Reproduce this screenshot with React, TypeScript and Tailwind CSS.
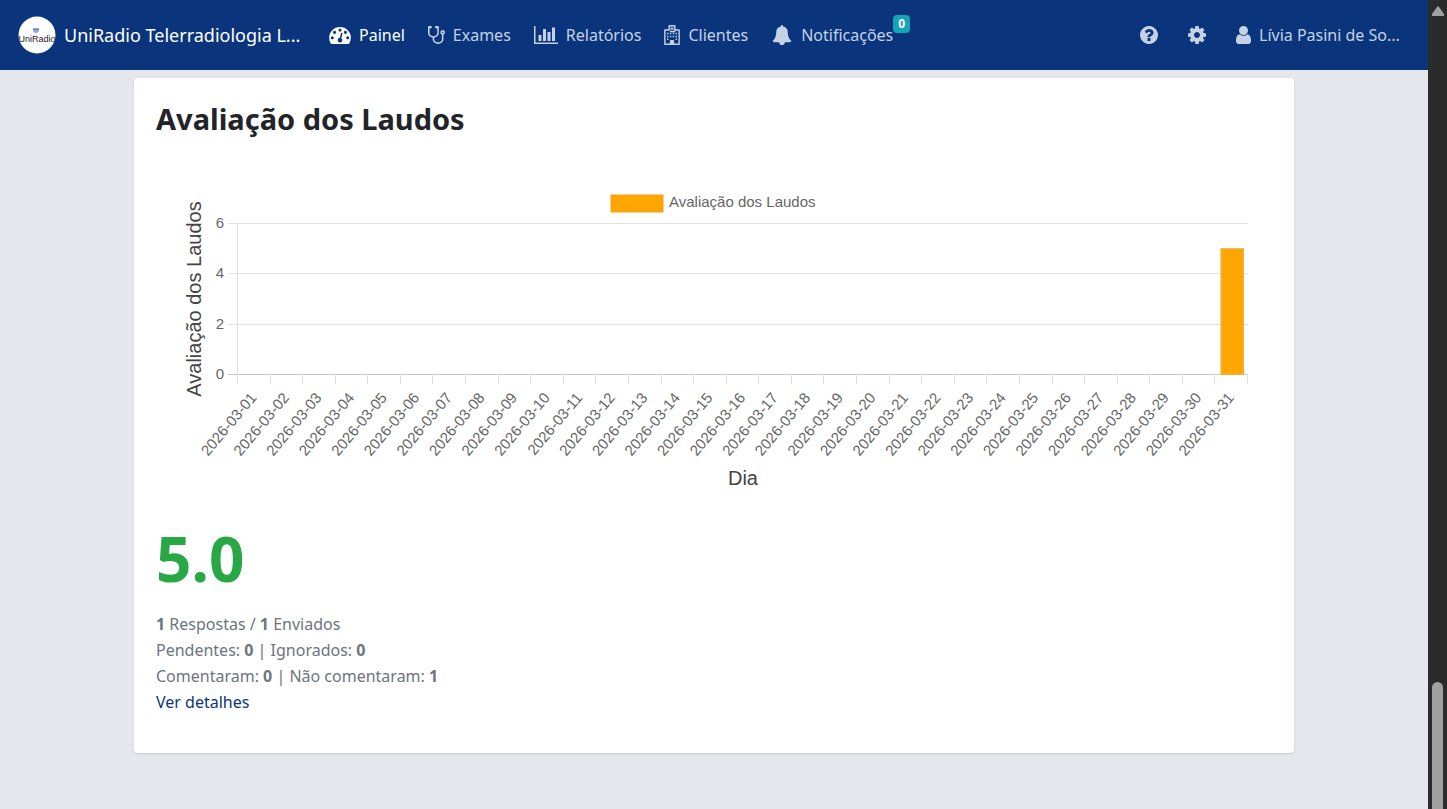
import type { ReactNode } from "react";

const icons = {
  dashboard:
    "M384 1152q0-53-37.5-90.5t-90.5-37.5-90.5 37.5-37.5 90.5 37.5 90.5 90.5 37.5 90.5-37.5 37.5-90.5zm192-448q0-53-37.5-90.5t-90.5-37.5-90.5 37.5-37.5 90.5 37.5 90.5 90.5 37.5 90.5-37.5 37.5-90.5zm428 481l101-382q6-26-7.5-48.5t-38.5-29.5-48 6.5-30 39.5l-101 382q-60 5-107 43.5t-63 98.5q-20 77 20 146t117 89 146-20 89-117q16-60-6-117t-72-91zm660-33q0-53-37.5-90.5t-90.5-37.5-90.5 37.5-37.5 90.5 37.5 90.5 90.5 37.5 90.5-37.5 37.5-90.5zm-640-640q0-53-37.5-90.5t-90.5-37.5-90.5 37.5-37.5 90.5 37.5 90.5 90.5 37.5 90.5-37.5 37.5-90.5zm448 192q0-53-37.5-90.5t-90.5-37.5-90.5 37.5-37.5 90.5 37.5 90.5 90.5 37.5 90.5-37.5 37.5-90.5zm320 448q0 261-141 483-19 29-54 29h-1402q-35 0-54-29-141-221-141-483 0-182 71-348t191-286 286-191 348-71 348 71 286 191 191 286 71 348z",
  stethoscope:
    "M1344 640q0-26-19-45t-45-19-45 19-19 45 19 45 45 19 45-19 19-45zm128 0q0 62-35.5 111t-92.5 70v395q0 159-131.5 271.5t-316.5 112.5-316.5-112.5-131.5-271.5v-132q-164-20-274-128t-110-252v-512q0-26 19-45t45-19q6 0 16 2 17-30 47-48t65-18q53 0 90.5 37.5t37.5 90.5-37.5 90.5-90.5 37.5q-33 0-64-18v402q0 106 94 181t226 75 226-75 94-181v-402q-31 18-64 18-53 0-90.5-37.5t-37.5-90.5 37.5-90.5 90.5-37.5q35 0 65 18t47 48q10-2 16-2 26 0 45 19t19 45v512q0 144-110 252t-274 128v132q0 106 94 181t226 75 226-75 94-181v-395q-57-21-92.5-70t-35.5-111q0-80 56-136t136-56 136 56 56 136z",
  chart:
    "M640 896v512h-256v-512h256zm384-512v1024h-256v-1024h256zm1024 1152v128h-2048v-1536h128v1408h1920zm-640-896v768h-256v-768h256zm384-384v1152h-256v-1152h256z",
  hospital:
    "M0 448q0-64 64-64h320v-320q0-64 64-64h512q64 0 64 64v320h320q64 0 64 64v1280q0 64-64 64h-1280q-64 0-64-64zM512 128v384h384v-384zM128 512v1152h384v-256q0-64 64-64h256q64 0 64 64v256h384v-1152h-256q0 128-64 128h-384q-64 0-64-128zM576 192h96v96h64v-96h96v256h-96v-80h-64v80h-96zM256 704h128v128h-128zM512 704h128v128h-128zM768 704h128v128h-128zM1024 704h128v128h-128zM256 960h128v128h-128zM512 960h128v128h-128zM768 960h128v128h-128zM1024 960h128v128h-128zM256 1216h128v128h-128zM1024 1216h128v128h-128z",
  bell: "M1728 1408q0 52-38 90t-90 38h-448q0 106-75 181t-181 75-181-75-75-181h-448q-52 0-90-38t-38-90q50-42 91-88t85-119.5 74.5-158.5 50-206 19.5-260q0-152 117-282.5t307-158.5q-8-19-8-39 0-40 28-68t68-28 68 28 28 68q0 20-8 39 190 28 307 158.5t117 282.5q0 139 19.5 260t50 206 74.5 158.5 85 119.5 91 88z",
  help: "M1024 1376v-192q0-14-9-23t-23-9h-192q-14 0-23 9t-9 23v192q0 14 9 23t23 9h192q14 0 23-9t9-23zm256-672q0-88-55.5-163t-138.5-116-170-41q-243 0-371 213-15 24 8 42l132 100q7 6 19 6 16 0 25-12 53-68 86-92 34-24 86-24 48 0 85.5 26t37.5 59q0 38-20 61t-68 45q-63 28-115.5 86.5t-52.5 125.5v36q0 14 9 23t23 9h192q14 0 23-9t9-23q0-19 21.5-49.5t54.5-49.5q32-18 49-28.5t46-35 44.5-48 28-60.5 12.5-81zm384 192q0 209-103 385.5t-279.5 279.5-385.5 103-385.5-103-279.5-279.5-103-385.5 103-385.5 279.5-279.5 385.5-103 385.5 103 279.5 279.5 103 385.5z",
  cog: "M1152 896q0-106-75-181t-181-75-181 75-75 181 75 181 181 75 181-75 75-181zm512-109v222q0 12-8 23t-20 13l-185 28q-19 54-39 91 35 50 107 138 10 12 10 25t-9 23q-27 37-99 108t-94 71q-12 0-26-9l-138-108q-44 23-91 38-16 136-29 186-7 28-36 28h-222q-14 0-24.5-8.5t-11.5-21.5l-28-184q-49-16-90-37l-141 107q-10 9-25 9-14 0-25-11-126-114-165-168-7-10-7-23 0-12 8-23 15-21 51-66.5t54-70.5q-27-50-41-99l-183-27q-13-2-21-12.5t-8-23.5v-222q0-12 8-23t19-13l186-28q14-46 39-92-40-57-107-138-10-12-10-24 0-10 9-23 26-36 98.5-107.5t94.5-71.5q13 0 26 10l138 107q44-23 91-38 16-136 29-186 7-28 36-28h222q14 0 24.5 8.5t11.5 21.5l28 184q49 16 90 37l142-107q9-9 24-9 13 0 25 10 129 119 165 170 7 8 7 22 0 12-8 23-15 21-51 66.5t-54 70.5q26 50 41 98l183 28q13 2 21 12.5t8 23.5z",
  user: "M1536 1399q0 109-62.5 187t-150.5 78h-854q-88 0-150.5-78t-62.5-187q0-85 8.5-160.5t31.5-152 58.5-131 94-89 134.5-34.5q131 128 313 128t313-128q76 0 134.5 34.5t94 89 58.5 131 31.5 152 8.5 160.5zm-256-887q0 159-112.5 271.5t-271.5 112.5-271.5-112.5-112.5-271.5 112.5-271.5 271.5-112.5 271.5 112.5 112.5 271.5z",
};

const Icon = ({ d, viewBox, className }: { d: string; viewBox: string; className: string }) => (
  <svg viewBox={viewBox} className={className} fill="currentColor" fillRule="evenodd" aria-hidden="true">
    <path d={d} />
  </svg>
);

const NavLink = ({ icon, active, children }: { icon: ReactNode; active?: boolean; children: ReactNode }) => (
  <a href="#" className={active ? "flex items-center gap-2 text-white" : "flex items-center gap-2"}>
    {icon}
    {children}
  </a>
);

const Header = () => {
  return (
    <header className="flex h-[70px] items-center bg-[#0a357d] pr-7 pl-[18px] text-[#c5d1e4]">
      <a href="#" className="flex w-[286px] shrink-0 items-center gap-2 text-white">
        <svg viewBox="0 0 38 38" className="size-[38px] shrink-0" role="img" aria-label="UniRadio">
          <clipPath id="logo">
            <circle cx="19" cy="19" r="18.5" />
          </clipPath>
          <circle cx="19" cy="19" r="18.5" fill="#fff" />
          <path d="M15 12h6v3q-1 2-3 2t-3-2z" fill="#98a5e3" />
          <path d="M15 13.500h6" stroke="#6c7fd0" />
          <text
            x="19"
            y="26"
            textAnchor="middle"
            fontSize="9"
            fontFamily="Liberation Sans, sans-serif"
            fill="#222"
            clipPath="url(#logo)"
          >
            UniRadio
          </text>
        </svg>
        <span className="text-lg leading-6 whitespace-nowrap">UniRadio Telerradiologia L...</span>
      </a>
      <nav className="ml-[25px] flex items-center gap-[23px]">
        <NavLink active icon={<Icon d={icons.dashboard} viewBox="0 256 1792 1408" className="h-[17px] w-[22px]" />}>
          Painel
        </NavLink>
        <NavLink icon={<Icon d={icons.stethoscope} viewBox="64 128 1408 1472" className="h-[18px] w-[17px]" />}>
          Exames
        </NavLink>
        <NavLink icon={<Icon d={icons.chart} viewBox="0 128 2048 1536" className="h-[18px] w-6" />}>
          Relatórios
        </NavLink>
        <NavLink icon={<Icon d={icons.hospital} viewBox="0 0 1408 1792" className="h-5 w-4" />}>
          Clientes
        </NavLink>
        <div className="relative">
          <NavLink icon={<Icon d={icons.bell} viewBox="64 0 1664 1792" className="h-5 w-[22px]" />}>
            Notificações
          </NavLink>
          <span className="absolute -top-[7px] left-full rounded bg-[#17a2b8] px-[5px] text-xs leading-[18px] font-bold text-white">
            0
          </span>
        </div>
      </nav>
      <div className="ml-auto flex items-center gap-[30px]">
        <button type="button" aria-label="Ajuda">
          <Icon d={icons.help} viewBox="128 128 1536 1536" className="size-[18px]" />
        </button>
        <button type="button" aria-label="Configurações">
          <Icon d={icons.cog} viewBox="128 128 1536 1536" className="size-[18px]" />
        </button>
        <a href="#" className="flex w-[164px] items-center gap-2">
          <Icon d={icons.user} viewBox="256 128 1280 1536" className="h-[18px] w-[15px] shrink-0" />
          <span className="whitespace-nowrap">Lívia Pasini de So...</span>
        </a>
      </div>
    </header>
  );
};

const ratings = Array.from({ length: 31 }, (_, i) => ({
  day: `2026-03-${String(i + 1).padStart(2, "0")}`,
  value: i === 30 ? 5 : 0,
}));

const plot = { left: 82, right: 1092, top: 64, bottom: 215 };
const step = (plot.right - plot.left) / ratings.length;
const yOf = (value: number) => plot.bottom - ((plot.bottom - plot.top) * value) / 6;

const RatingsChart = () => {
  return (
    <svg
      viewBox="0 0 1116 340"
      className="mt-[22px] block h-auto w-full"
      fontFamily="Liberation Sans, Arial, sans-serif"
      fontSize="15"
      fill="#666"
      role="img"
      aria-label="Avaliação dos Laudos"
    >
      <rect x="455" y="36" width="52" height="17" fill="#ffa500" stroke="#f0a31c" />
      <text x="513" y="48">
        Avaliação dos Laudos
      </text>
      <text transform="translate(45 140) rotate(-90)" textAnchor="middle" fontSize="20" fill="#444">
        Avaliação dos Laudos
      </text>

      {[0, 2, 4, 6].map((v) => (
        <g key={v}>
          <path
            d={`M${plot.left - 10} ${Math.round(yOf(v))}.5H${plot.right}`}
            stroke={v === 0 ? "#c8c8c8" : "#e2e2e2"}
          />
          <text x="68" y={yOf(v) + 5} textAnchor="end">
            {v}
          </text>
        </g>
      ))}
      <path d={`M${plot.left - 0.5} ${plot.top}V${plot.bottom + 10}`} stroke="#dedede" />

      {ratings.map(({ day, value }, i) => {
        const x = plot.left + step * i;
        return (
          <g key={day}>
            <path d={`M${Math.round(x + step) - 0.5} ${plot.bottom}v10`} stroke="#dedede" />
            {value > 0 && (
              <rect
                x={x + 6}
                y={yOf(value) + 1}
                width={step - 11}
                height={plot.bottom - yOf(value) - 1}
                fill="#ffa500"
                stroke="#f5ae2b"
                strokeWidth="2"
              />
            )}
            <text transform={`translate(${x + step / 2 + 3} ${plot.bottom + 24}) rotate(-50)`} textAnchor="end">
              {day}
            </text>
          </g>
        );
      })}
      <text x="587" y="326" textAnchor="middle" fontSize="20" fill="#444">
        Dia
      </text>
    </svg>
  );
};

const App = () => {
  return (
    <div className="flex h-screen overflow-hidden bg-[#e4e8ed] font-['Noto_Sans',sans-serif] text-base leading-[26px] text-[#212529]">
      <div className="min-w-0 flex-1">
        <Header />
        <main className="mx-auto mt-2 max-w-[1160px] rounded bg-white px-[22px] pt-[23px] pb-[38px] shadow-sm">
          <h1 className="text-[29px] leading-9 font-bold">Avaliação dos Laudos</h1>
          <RatingsChart />
          <p className="mt-6 text-[62px] leading-[70px] font-bold text-[#28a745]">5.0</p>
          <div className="mt-[18px] text-[#6c757d]">
            <p>
              <strong>1</strong> Respostas / <strong>1</strong> Enviados
            </p>
            <p>
              Pendentes: <strong>0</strong> | Ignorados: <strong>0</strong>
            </p>
            <p>
              Comentaram: <strong>0</strong> | Não comentaram: <strong>1</strong>
            </p>
            <a href="#" className="text-[#0a357d]">
              Ver detalhes
            </a>
          </div>
        </main>
      </div>
      {/* page scroll track */}
      <div className="flex w-[19px] shrink-0 flex-col items-center justify-between bg-[#2b2b2b]">
        <svg viewBox="0 0 12 10" className="mt-[6px] h-[10px] w-3" fill="#a0a0a0" aria-hidden="true">
          <path d="M5 1q1-1.500 2 0l5 7q.5 2-1 2H1q-1.500 0-1-2z" />
        </svg>
        <div className="h-[127px] w-[11px] rounded-t-full bg-[#a0a0a0]" />
      </div>
    </div>
  );
};

export default App;
